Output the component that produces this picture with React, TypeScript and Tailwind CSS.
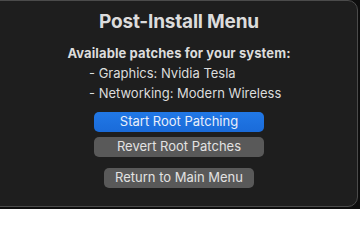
import React from "react";

const font = { fontFamily: '"Inter", "Noto Sans", sans-serif' };

const PostInstallMenu: React.FC = () => {
  return (
    <div className="w-[360px] h-[209px] bg-[#0e0e0e] overflow-hidden" style={font}>
      <div className="ml-[-12px] w-[370px] h-[207px] bg-[#1e1e1e] border border-[#4b4b4b] rounded-[10px] flex flex-col items-center text-[#dcdcdc]">
        <h1 className="mt-[9px] pl-[12px] text-[19px] leading-[24px] font-bold tracking-[-0.2px]">
          Post-Install Menu
        </h1>
        <div className="mt-[11px] pl-[12px] text-[13px] leading-[16px] font-bold tracking-[0.1px]">
          Available patches for your system:
        </div>
        <div className="mt-[2px] w-full pl-[100px] text-[13px] leading-[20px]">
          <div>- Graphics: Nvidia Tesla</div>
          <div>- Networking: Modern Wireless</div>
        </div>
        <div className="mt-[9px] pl-[12px] flex flex-col items-center">
          <button className="w-[170px] h-[20px] rounded-[5px] bg-gradient-to-b from-[#2178e6] to-[#1a6bd9] text-[13px] text-[#e8eefa]">
            Start Root Patching
          </button>
          <button className="mt-[5px] w-[170px] h-[20px] rounded-[5px] bg-[#595959] text-[13px] text-[#e2e2e2]">
            Revert Root Patches
          </button>
          <button className="mt-[11px] w-[150px] h-[20px] rounded-[5px] bg-[#595959] text-[13px] text-[#e2e2e2]">
            Return to Main Menu
          </button>
        </div>
      </div>
    </div>
  );
};

export default function App() {
  return <PostInstallMenu />;
}
